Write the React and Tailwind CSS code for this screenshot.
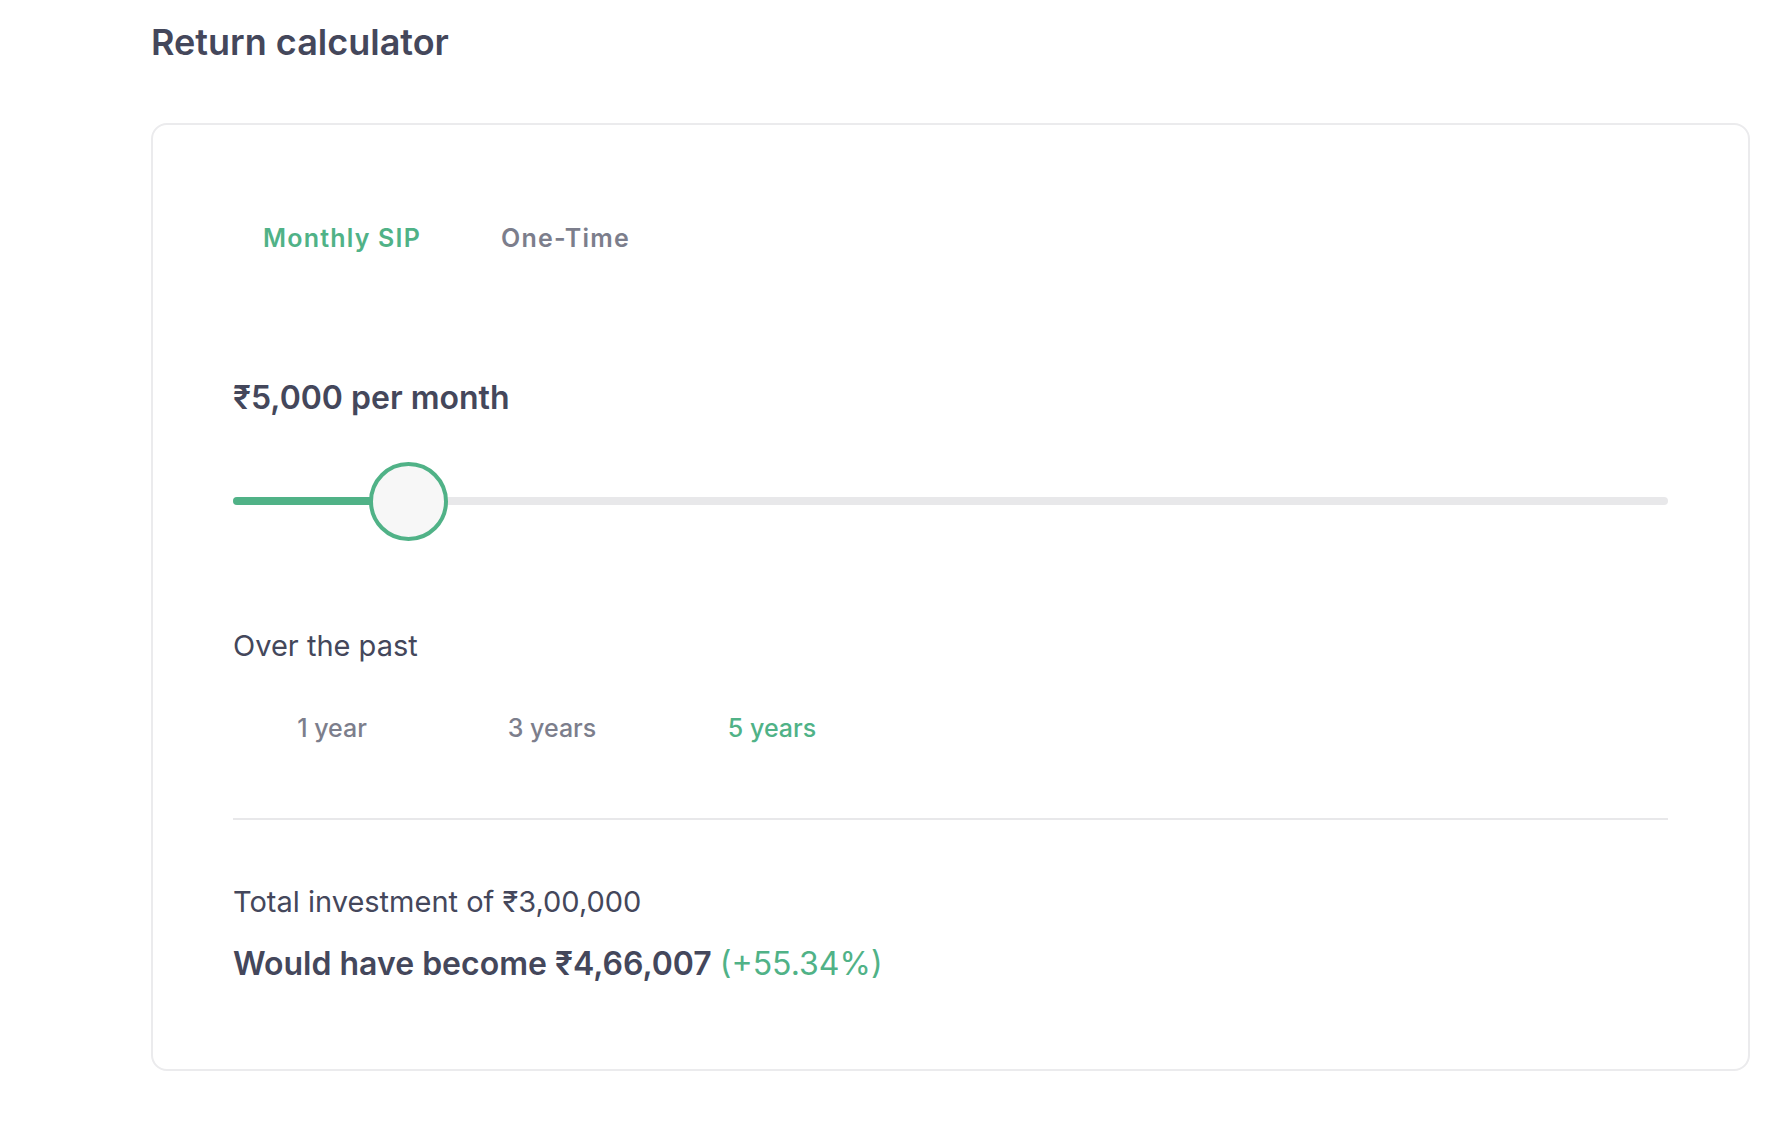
import React, { useState } from 'react';

const tabs = ['Monthly SIP', 'One-Time'];
const periods = ['1 year', '3 years', '5 years'];

export default function App() {
  const [tab, setTab] = useState(0);
  const [period, setPeriod] = useState(2);
  const thumbLeft = 136;

  return (
    <div
      className="min-h-screen bg-white pl-[151px] pr-[38px] pt-[20px] text-[#44475b]"
      style={{ fontFamily: 'Inter, "Noto Sans", sans-serif' }}
    >
      <h2 className="text-[36px] leading-[44px] font-semibold">Return calculator</h2>

      <div className="mt-[59px] rounded-2xl border-2 border-[#ebebed] px-[80px] pt-[98px] pb-[85px]">
        {/* tabs */}
        <div className="flex gap-[20px]">
          {tabs.map((t, i) => (
            <button
              key={t}
              onClick={() => setTab(i)}
              className={`px-[30px] text-[25px] leading-[30px] font-semibold tracking-[1.2px] ${
                tab === i ? 'text-[#50b287]' : 'text-[#7c7e8c]'
              }`}
            >
              {t}
            </button>
          ))}
        </div>

        <div className="mt-[125px] text-[32px] leading-[40px] font-semibold">₹5,000 per month</div>

        {/* slider */}
        <div className="relative mt-[43px] h-[80px]">
          <div className="absolute left-0 right-0 top-[36px] h-[8px] rounded-full bg-[#e8e8ea]" />
          <div
            className="absolute left-0 top-[36px] h-[8px] rounded-l-full bg-[#50b287]"
            style={{ width: thumbLeft + 4 }}
          />
          <div
            className="absolute top-[1px] h-[79px] w-[79px] rounded-full border-[4px] border-[#50b287] bg-[#f7f7f7]"
            style={{ left: thumbLeft }}
          />
        </div>

        <div className="mt-[87px] text-[29px] leading-[36px]">Over the past</div>

        <div className="mt-[48px] flex gap-[22px]">
          {periods.map((p, i) => (
            <button
              key={p}
              onClick={() => setPeriod(i)}
              className={`w-[198px] text-center text-[25px] leading-[32px] font-medium ${
                period === i ? 'text-[#50b287]' : 'text-[#7c7e8c]'
              }`}
            >
              {p}
            </button>
          ))}
        </div>

        <div className="mt-[74px] h-[2px] bg-[#e8e8ea]" />

        <div className="mt-[64px] text-[29px] leading-[36px]">Total investment of ₹3,00,000</div>
        <div className="mt-[24px] text-[32px] leading-[40px] font-semibold">
          Would have become ₹4,66,007{' '}
          <span className="font-normal text-[#50b287]">(+55.34%)</span>
        </div>
      </div>
    </div>
  );
}
